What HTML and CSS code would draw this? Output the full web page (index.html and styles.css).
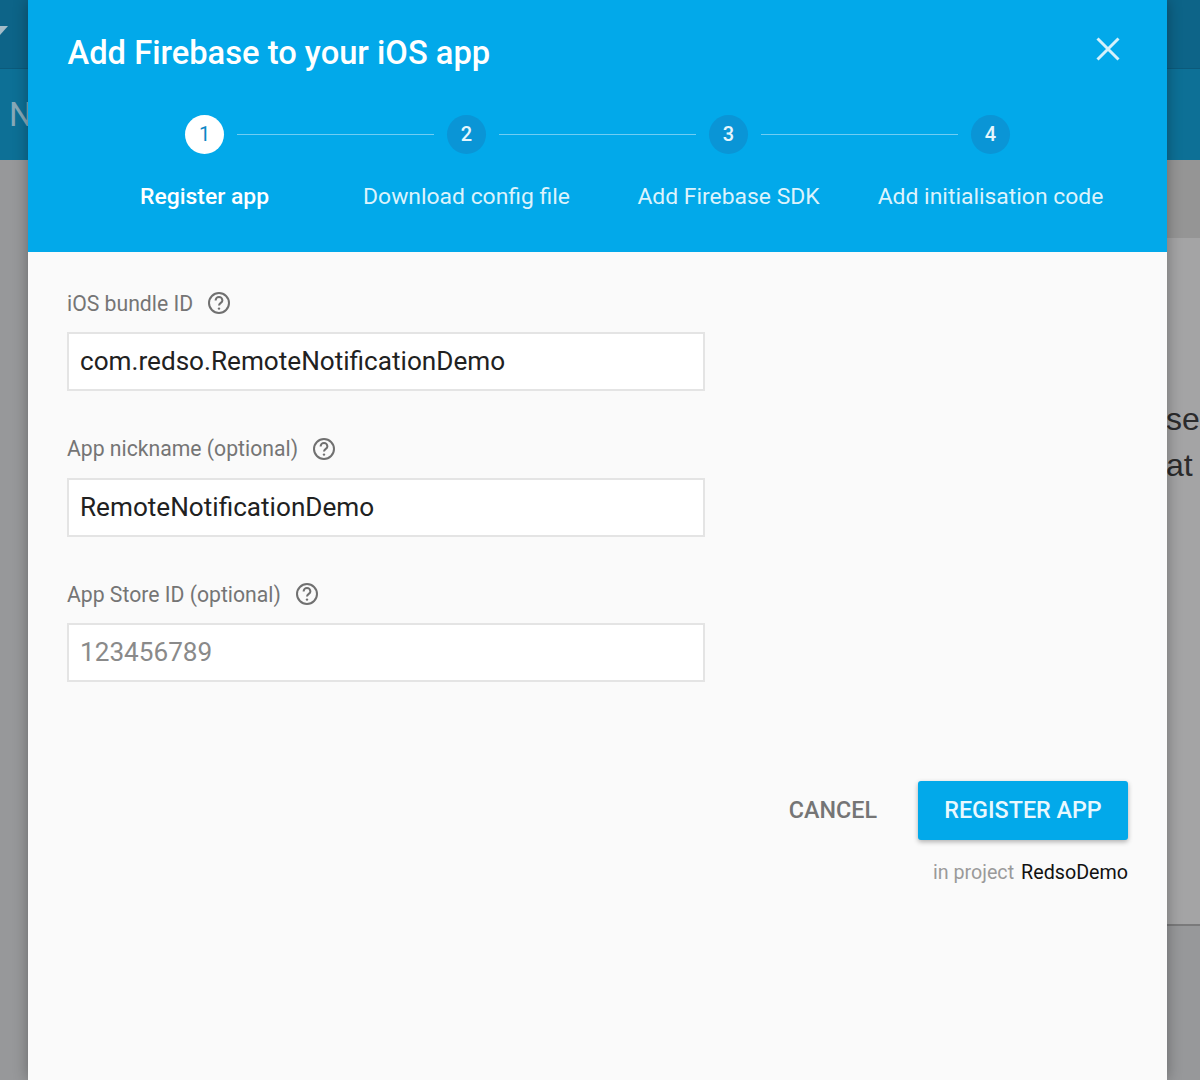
FILE: index.html
```html
<!DOCTYPE html>
<html lang="en">
<head>
<meta charset="utf-8">
<title>Add Firebase to your iOS app</title>
<link rel="stylesheet" href="styles.css">
</head>
<body>
<div class="page">
  <div class="topbar"><span class="caret"></span></div>
  <div class="subbar"><span class="subbar-title">N</span></div>
  <div class="content">
    <div class="tabstrip"></div>
    <div class="card">
      <p class="card-line">se</p>
      <p class="card-line">at</p>
    </div>
  </div>
</div>
<section class="modal">
  <header class="modal-head">
    <div class="title-row">
      <h1 class="title">Add Firebase to your iOS app</h1>
      <svg class="close" viewBox="0 0 24 24" aria-label="Close"><path d="M1.5 1.5 22.5 22.5M22.5 1.5 1.5 22.5"/></svg>
    </div>
    <div class="track">
      <span class="dot dot-active">1</span><span class="line"></span>
      <span class="dot">2</span><span class="line"></span>
      <span class="dot">3</span><span class="line"></span>
      <span class="dot">4</span>
    </div>
    <div class="labels">
      <span class="label label-active">Register app</span>
      <span class="label">Download config file</span>
      <span class="label">Add Firebase SDK</span>
      <span class="label">Add initialisation code</span>
    </div>
  </header>
  <div class="modal-body">
    <form class="form">
      <div class="field">
        <div class="field-label">iOS bundle ID
          <svg class="help" viewBox="0 0 24 24"><circle cx="12" cy="12" r="10"/><path d="M8.6 9.4a3.4 3.4 0 0 1 6.8 0c0 2.4-3.4 2.6-3.4 5.2"/><circle class="help-dot" cx="12" cy="17.6" r="1.2"/></svg>
        </div>
        <div class="input">com.redso.RemoteNotificationDemo</div>
      </div>
      <div class="field">
        <div class="field-label">App nickname (optional)
          <svg class="help" viewBox="0 0 24 24"><circle cx="12" cy="12" r="10"/><path d="M8.6 9.4a3.4 3.4 0 0 1 6.8 0c0 2.4-3.4 2.6-3.4 5.2"/><circle class="help-dot" cx="12" cy="17.6" r="1.2"/></svg>
        </div>
        <div class="input">RemoteNotificationDemo</div>
      </div>
      <div class="field">
        <div class="field-label">App Store ID (optional)
          <svg class="help" viewBox="0 0 24 24"><circle cx="12" cy="12" r="10"/><path d="M8.6 9.4a3.4 3.4 0 0 1 6.8 0c0 2.4-3.4 2.6-3.4 5.2"/><circle class="help-dot" cx="12" cy="17.6" r="1.2"/></svg>
        </div>
        <div class="input input-placeholder">123456789</div>
      </div>
    </form>
    <div class="actions">
      <span class="btn-text">CANCEL</span>
      <span class="btn-primary">REGISTER APP</span>
    </div>
    <div class="project"><span class="project-pre">in project</span><span class="project-name">RedsoDemo</span></div>
  </div>
</section>
</body>
</html>
```
FILE: styles.css
```css
* { box-sizing: border-box; }
html, body { margin: 0; height: 100%; overflow: hidden; }
body { position: relative; width: 1200px; height: 1080px; font-family: Roboto, "Liberation Sans", sans-serif; background: #97989a; }

.page { display: flex; flex-direction: column; height: 1080px; }
.topbar { height: 69px; background: #0d6488; border-bottom: 1px solid #0b5a7b; overflow: hidden; }
.caret { display: block; width: 8px; height: 9px; margin-top: 26px; background: #a4bdc9; clip-path: polygon(0 0, 100% 0, 0 100%); }
.subbar { height: 91px; background: #0d7096; padding: 24px 0 0 9px; }
.subbar-title { font-size: 33px; line-height: 44px; color: #87a9b8; }
.content { flex: 1; display: flex; flex-direction: column; padding-left: 600px; }
.tabstrip { height: 78px; background: #959595; }
.card { height: 688px; background: #a4a4a5; border-bottom: 2px solid #7a7a7b; padding: 158px 0 0 566px; }
.card-line { margin: 0; font-family: "Liberation Sans", Arial, sans-serif; font-size: 32px; line-height: 46px; color: #2b2b2c; white-space: nowrap; }

.modal { position: absolute; left: 28px; top: 0; width: 1139px; height: 1080px; background: #fafafa; display: flex; flex-direction: column; box-shadow: 0 0 14px rgba(0,0,0,.32); }
.modal-head { height: 252px; background: #02a9ea; color: #fff; padding: 0 47px 0 39.5px; }
.title-row { display: flex; justify-content: space-between; align-items: center; height: 102px; }
.title { margin: 4px 0 0; font-size: 32.7px; font-weight: 500; line-height: 40px; }
.close { width: 24px; height: 24px; margin-bottom: 4px; fill: none; stroke: #d5f1fb; stroke-width: 3; }

.track { display: flex; align-items: center; height: 40px; margin: 12px 0 0 117.5px; width: 825px; }
.dot { width: 39px; height: 39px; flex: none; border-radius: 50%; background: #0a95d6; color: #e6f6fd; font-size: 20px; font-weight: 500; line-height: 39px; text-align: center; }
.dot-active { background: #fff; color: #0a87c6; font-weight: 400; }
.line { flex: 1; height: 1px; margin: 0 13px; background: #6fcdf3; }

.labels { display: grid; grid-template-columns: repeat(4, 262px); margin: 23px 0 0 6px; }
.label { text-align: center; font-size: 22.9px; line-height: 40px; color: #dcf3fc; white-space: nowrap; }
.label-active { color: #fff; font-weight: 500; }

.modal-body { flex: 1; padding: 0 39px; }
.form { width: 638px; margin-top: 33px; display: flex; flex-direction: column; gap: 39.7px; }
.field { display: flex; flex-direction: column; }
.field-label { display: flex; align-items: center; gap: 14px; height: 36px; font-size: 21.2px; color: #757575; margin-bottom: 11px; }
.help { width: 24px; height: 24px; fill: none; stroke: #707070; stroke-width: 2; }
.help-dot { fill: #707070; stroke: none; }
.input { height: 59px; background: #fff; border: 2px solid #e4e4e4; padding-left: 11px; font-size: 26.15px; line-height: 54px; color: #212121; white-space: nowrap; }
.input-placeholder { color: #8a8a8a; }

.actions { display: flex; justify-content: flex-end; align-items: center; gap: 41px; margin-top: 98.6px; }
.btn-text { font-size: 23.3px; font-weight: 500; color: #757575; }
.btn-primary { width: 210px; height: 59px; border-radius: 3px; background: #02a9ea; color: #e9f8fe; font-size: 23.3px; font-weight: 500; line-height: 59px; text-align: center; box-shadow: 0 2px 5px rgba(0,0,0,.3); }
.project { display: flex; justify-content: flex-end; gap: 7px; margin-top: 19px; font-size: 19.7px; line-height: 28px; }
.project-pre { color: #9a9a9a; }
.project-name { color: #111; }
```
